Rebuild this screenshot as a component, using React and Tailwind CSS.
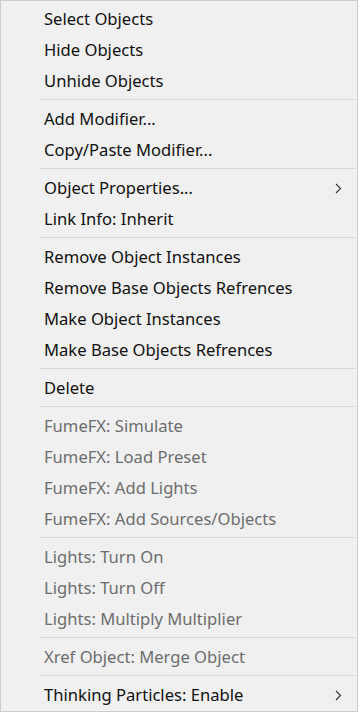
import React from "react";

const groups = [
  [
    { label: "Select Objects" },
    { label: "Hide Objects" },
    { label: "Unhide Objects" },
  ],
  [{ label: "Add Modifier..." }, { label: "Copy/Paste Modifier..." }],
  [{ label: "Object Properties...", sub: true }, { label: "Link Info: Inherit" }],
  [
    { label: "Remove Object Instances" },
    { label: "Remove Base Objects Refrences" },
    { label: "Make Object Instances" },
    { label: "Make Base Objects Refrences" },
  ],
  [{ label: "Delete" }],
  [
    { label: "FumeFX: Simulate", off: true },
    { label: "FumeFX: Load Preset", off: true },
    { label: "FumeFX: Add Lights", off: true },
    { label: "FumeFX: Add Sources/Objects", off: true },
  ],
  [
    { label: "Lights: Turn On", off: true },
    { label: "Lights: Turn Off", off: true },
    { label: "Lights: Multiply Multiplier", off: true },
  ],
  [{ label: "Xref Object: Merge Object", off: true }],
  [{ label: "Thinking Particles: Enable", sub: true }],
];

function Chevron() {
  return (
    <svg width="7" height="11" viewBox="0 0 7 11" className="text-[#333]">
      <path d="M1 1l4.5 4.5L1 10" fill="none" stroke="currentColor" strokeWidth="1.1" />
    </svg>
  );
}

function Item({ label, sub, off }) {
  return (
    <div
      className={`h-[31px] flex items-center pl-[43px] pr-[15px] text-[16.6px] ${
        off ? "text-[#6d6d6d]" : "text-[#111]"
      }`}
    >
      <span className="flex-1 whitespace-nowrap">{label}</span>
      {sub && <Chevron />}
    </div>
  );
}

export default function App() {
  return (
    <div className="w-[360px] h-[713px] bg-white">
      <div
        className="w-[358px] h-[712px] bg-[#f0f0f0] border border-[#cccccc] pt-[3px] flex flex-col"
        style={{ fontFamily: '"Segoe UI", "Noto Sans", sans-serif' }}
      >
        {groups.map((g, i) => (
          <div key={i}>
            {i > 0 && <div className="ml-[39px] mr-[1px] mt-[2px] mb-[4px] h-px bg-[#d7d7d7]" />}
            {g.map((it) => (
              <Item key={it.label} {...it} />
            ))}
          </div>
        ))}
      </div>
    </div>
  );
}
